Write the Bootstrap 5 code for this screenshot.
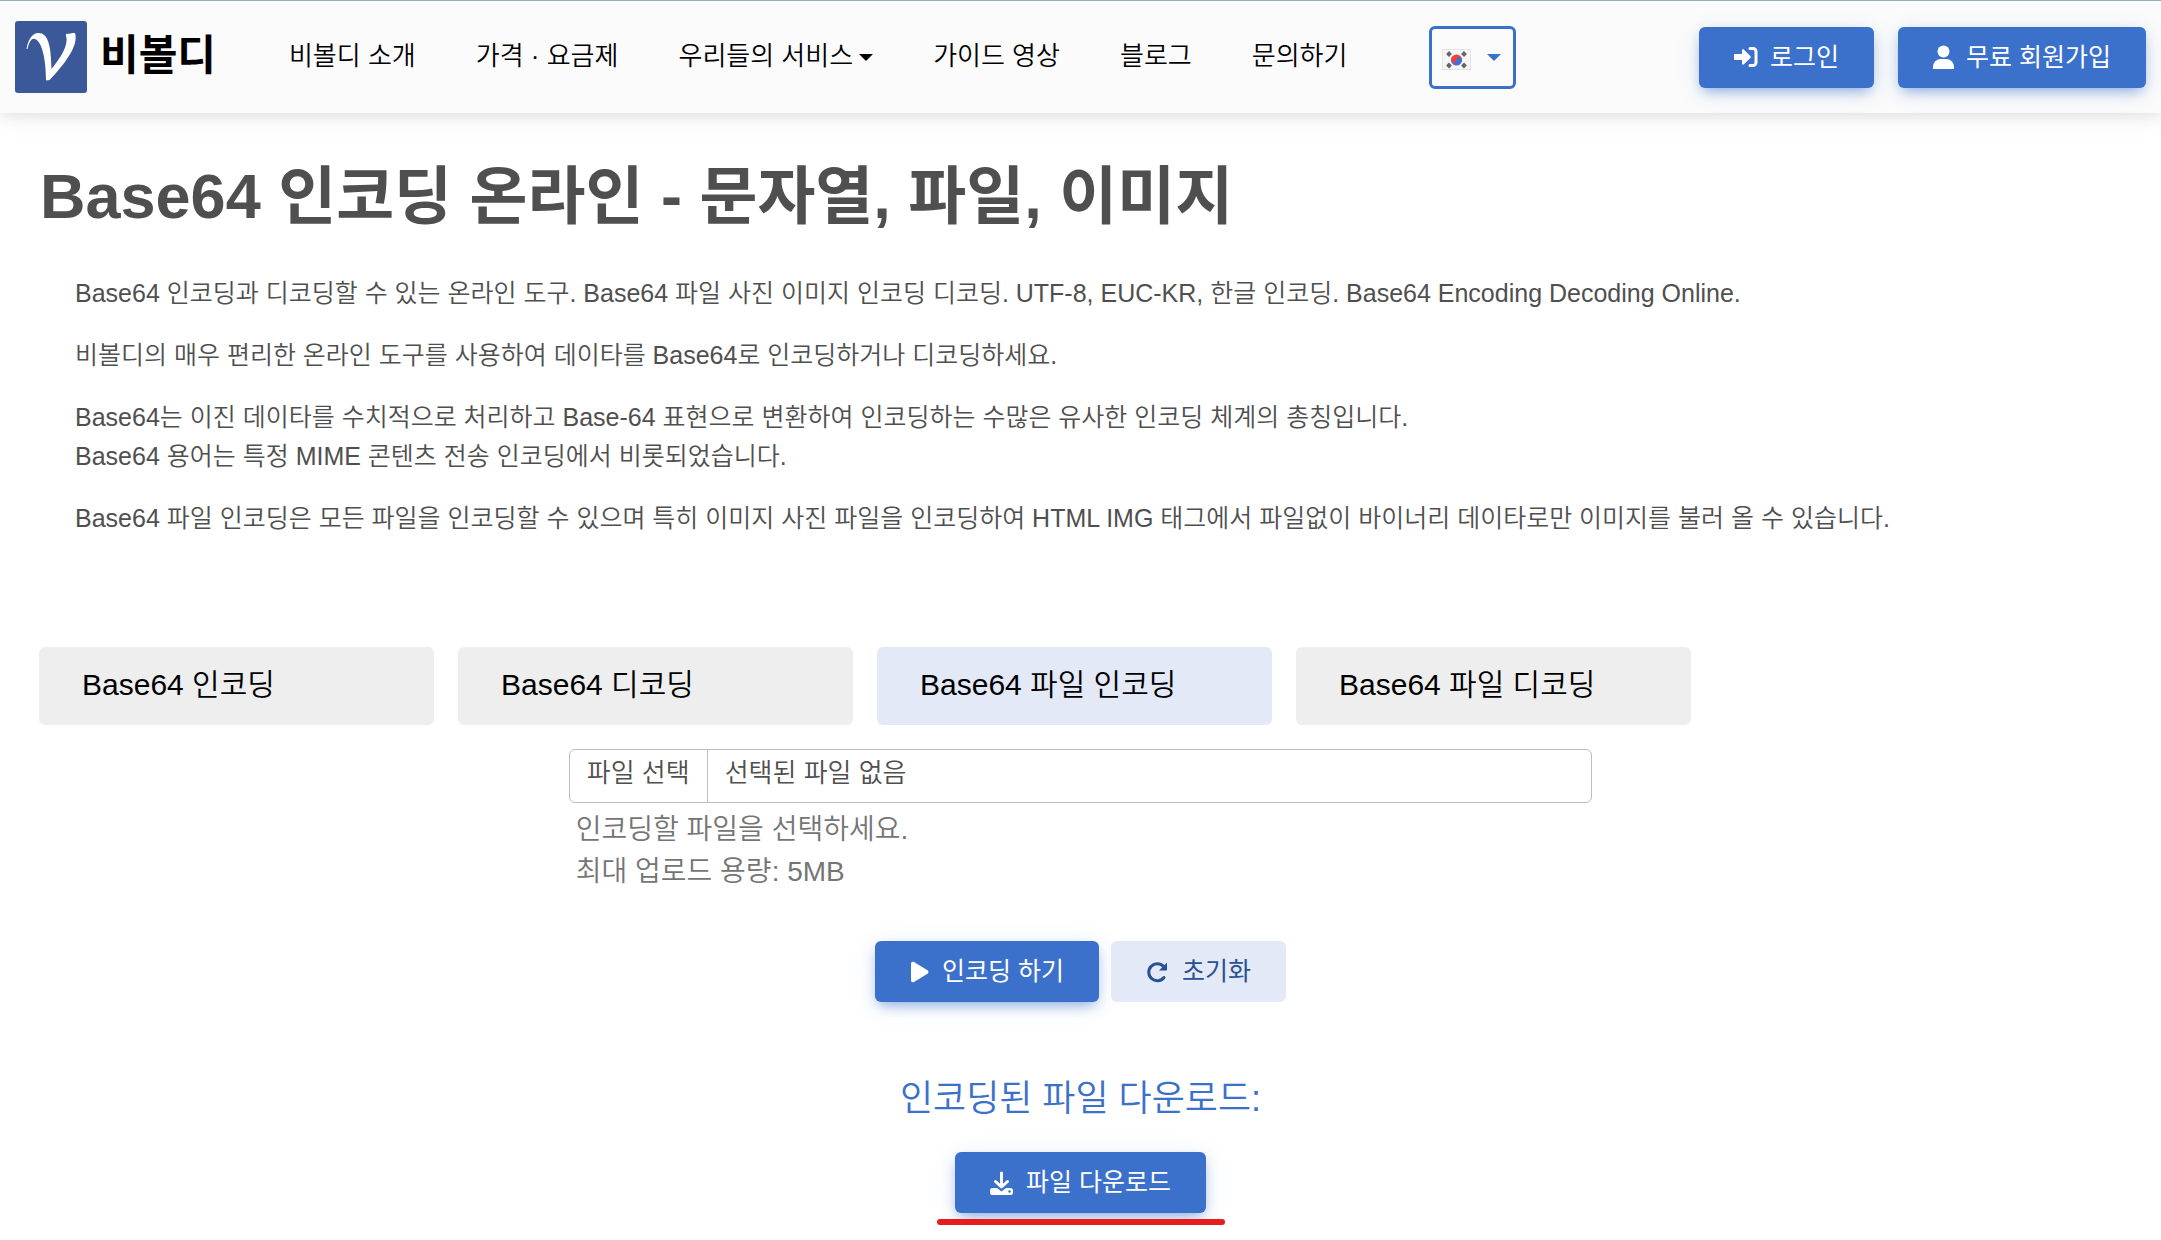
<!DOCTYPE html>
<html lang="ko">
<head>
<meta charset="utf-8">
<meta name="viewport" content="width=device-width, initial-scale=1">
<title>Base64 인코딩 온라인 - 비볼디</title>
<link href="https://cdn.jsdelivr.net/npm/bootstrap@5.3.0/dist/css/bootstrap.min.css" rel="stylesheet">
<style>
  :root { --brand: #3b71ca; --brand-soft: #e3e9f7; --ink: #4f4f4f; }
  body { font-family: "Liberation Sans", "Noto Sans CJK KR", sans-serif; font-size: 25px; font-weight: 350; line-height: 39px; color: var(--ink); background: #fff; }
  .site-bar { background: #fbfbfb; border-top: 1px solid #8fb1b7; min-height: 113px; padding: 0 15px; box-shadow: 0 4px 12px rgba(0,0,0,.08), 0 4px 30px rgba(0,0,0,.05); }
  .site-bar .navbar-brand { font-size: 42px; font-weight: 700; line-height: 48px; color: #000; gap: 13px; margin-right: 43px; }
  .brand-name { padding-bottom: 2px; }
  .site-bar .navbar-nav .nav-link { padding: 0 30px 2px; font-size: 26px; line-height: 40px; color: #000; white-space: nowrap; }
  .site-bar .dropdown-toggle::after { margin-left: 6px; border-width: 7px; border-bottom: 0; vertical-align: 4px; }
  .lang-btn { border: 3px solid var(--brand); color: var(--brand); width: 87px; height: 63px; padding: 0 10px; margin-left: 52px; border-radius: 6px; }
  .site-bar .lang-btn::after { margin-left: 16px; vertical-align: 0; }
  .act { font-size: 25px; font-weight: 400; line-height: 37px; padding: 12px 35px; gap: 12px; border: 0; border-radius: 6px; white-space: nowrap; display: inline-flex; align-items: center; }
  .act-main, .act-main:hover { background: var(--brand); color: #fff; box-shadow: 0 6px 14px -4px rgba(59,113,202,.6), 0 4px 24px rgba(59,113,202,.12); }
  .act-soft { background: var(--brand-soft); color: #285192; }
  .ico { height: 24px; fill: currentColor; flex: none; }
  .page-title { font-size: 63px; line-height: 74px; font-weight: 700; padding: 46px 40px 0; margin-bottom: 41px; }
  .intro { padding: 0 75px; margin-bottom: 109px; }
  .intro p { margin-bottom: 23px; }
  .tools { padding: 0 51px 0 39px; margin-bottom: 24px; }
  .tool-tab { display: block; width: 100%; font-size: 30px; font-weight: 350; line-height: 46px; padding: 15px 43px 17px; border: 0; border-radius: 6px; background: #eee; color: #000; text-align: left; white-space: nowrap; }
  .tool-tab.active { background: var(--brand-soft); }
  .upload { padding: 0 45px; }
  .file-box { font-size: 26px; border: 1px solid #bdbdbd; border-radius: 6px; height: 54px; color: var(--ink); cursor: pointer; }
  .file-box span { padding: 4px 17px 9px; }
  .file-box .pick { border-right: 1px solid #bdbdbd; }
  .file-note { font-size: 28px; line-height: 42px; color: #757575; padding: 6px 7px 0; margin-bottom: 48px; }
  .result-title { font-size: 36px; line-height: 54px; font-weight: 350; color: var(--brand); margin: 70px 0 26px; }
  .underline-mark { width: 288px; height: 6px; border-radius: 3px; background: #e81c1c; margin-top: 6px; }
</style>
</head>
<body>
<nav class="navbar navbar-expand site-bar">
  <a class="navbar-brand d-flex align-items-center p-0" href="#">
    <svg width="72" height="72" viewBox="0 0 72 72" role="img" aria-label="비볼디 로고"><rect width="72" height="72" rx="3" fill="#3b5998"/><path d="M11.500 28C13 19 17 12 23.500 12 33 12 36 24 36.500 48 46 36 54 24 51 14.500V13c3-.3 6-1 9-1 4 12-10 31-25.500 47l-3.500.5C31 42 28 21 20 18c-4-1-6 4-7.500 10z" fill="#fff"/></svg>
    <span class="brand-name">비볼디</span>
  </a>
  <ul class="navbar-nav align-items-center">
    <li class="nav-item"><a class="nav-link" href="#">비볼디 소개</a></li>
    <li class="nav-item"><a class="nav-link" href="#">가격 · 요금제</a></li>
    <li class="nav-item dropdown"><a class="nav-link dropdown-toggle" href="#" role="button" data-bs-toggle="dropdown">우리들의 서비스</a></li>
    <li class="nav-item"><a class="nav-link" href="#">가이드 영상</a></li>
    <li class="nav-item"><a class="nav-link" href="#">블로그</a></li>
    <li class="nav-item"><a class="nav-link" href="#">문의하기</a></li>
  </ul>
  <button type="button" class="btn lang-btn dropdown-toggle d-flex align-items-center" aria-label="한국어" data-bs-toggle="dropdown">
    <svg width="29" height="25" viewBox="0 0 29 25" aria-hidden="true"><rect y="4" width="29" height="21" fill="#e4e4e4"/><rect x="1" y="5" width="27" height="19" fill="#f6f6f6"/><path d="M9 15a5.500 5.500 0 0 1 11 0z" fill="#f0413f"/><path d="M9 15a5.500 5.500 0 0 0 11 0z" fill="#3f6fd8"/><circle cx="11.700" cy="15" r="2.700" fill="#f0413f"/><circle cx="17.300" cy="15" r="2.700" fill="#3f6fd8"/><path d="M5.500 10.500l3-3M20.500 7.500l3 3M5.500 19l3 3M20.500 22l3-3" stroke="#666" stroke-width="4"/></svg>
  </button>
  <div class="d-flex gap-4 ms-auto">
    <button type="button" class="btn act act-main"><svg class="ico" width="24" viewBox="0 0 24 24"><path d="M1 9h7V5.500c0-1.200 1.200-1.500 2-.7l6.300 6.200c.6.600.6 1.400 0 2L10 19.200c-.8.800-2 .5-2-.7V15H1c-.6 0-1-.4-1-1v-4c0-.6.4-1 1-1z"/><path d="M16 3.500h3a3 3 0 0 1 3 3v11a3 3 0 0 1-3 3h-3" fill="none" stroke="currentColor" stroke-width="3" stroke-linecap="round"/></svg>로그인</button>
    <button type="button" class="btn act act-main"><svg class="ico" width="21" viewBox="0 0 21 24"><circle cx="10.500" cy="6.500" r="6"/><path d="M0 24v-2a8 8 0 0 1 8-8h5a8 8 0 0 1 8 8v2z"/></svg>무료 회원가입</button>
  </div>
</nav>

<main>
  <h1 class="page-title">Base64 인코딩 온라인 - 문자열, 파일, 이미지</h1>
  <section class="intro">
    <p>Base64 인코딩과 디코딩할 수 있는 온라인 도구. Base64 파일 사진 이미지 인코딩 디코딩. UTF-8, EUC-KR, 한글 인코딩. Base64 Encoding Decoding Online.</p>
    <p>비볼디의 매우 편리한 온라인 도구를 사용하여 데이타를 Base64로 인코딩하거나 디코딩하세요.</p>
    <p>Base64는 이진 데이타를 수치적으로 처리하고 Base-64 표현으로 변환하여 인코딩하는 수많은 유사한 인코딩 체계의 총칭입니다.<br>Base64 용어는 특정 MIME 콘텐츠 전송 인코딩에서 비롯되었습니다.</p>
    <p>Base64 파일 인코딩은 모든 파일을 인코딩할 수 있으며 특히 이미지 사진 파일을 인코딩하여 HTML IMG 태그에서 파일없이 바이너리 데이타로만 이미지를 불러 올 수 있습니다.</p>
  </section>

  <div class="tools">
    <div class="row row-cols-5 gx-4">
      <div class="col"><button type="button" class="tool-tab">Base64 인코딩</button></div>
      <div class="col"><button type="button" class="tool-tab">Base64 디코딩</button></div>
      <div class="col"><button type="button" class="tool-tab active">Base64 파일 인코딩</button></div>
      <div class="col"><button type="button" class="tool-tab">Base64 파일 디코딩</button></div>
    </div>
  </div>

  <form class="upload">
    <div class="row gx-4 justify-content-center">
      <div class="col-6">
        <input class="visually-hidden" type="file" id="source-file">
        <label class="file-box d-flex" for="source-file"><span class="pick">파일 선택</span><span>선택된 파일 없음</span></label>
        <div class="file-note">인코딩할 파일을 선택하세요.<br>최대 업로드 용량: 5MB</div>
      </div>
    </div>
    <div class="d-flex justify-content-center">
      <button type="button" class="btn act act-main me-2"><svg class="ico" width="20" viewBox="0 0 20 24"><path d="M1 4c0-2 1.500-2.800 3-2l13.500 8.300c1.300.8 1.300 2.600 0 3.400L4 22c-1.500.8-3 0-3-2z"/></svg>인코딩 하기</button>
      <button type="button" class="btn act act-soft ms-1"><svg class="ico" width="24" viewBox="0 0 24 24"><path d="M18 17.500a8.500 8.500 0 1 1-.5-11" fill="none" stroke="currentColor" stroke-width="3" stroke-linecap="round"/><path d="M21 2.500v7.200c0 .5-.3.800-.8.800H13z"/></svg>초기화</button>
    </div>
    <h2 class="result-title text-center">인코딩된 파일 다운로드:</h2>
    <div class="d-flex flex-column align-items-center">
      <button type="button" class="btn act act-main"><svg class="ico" width="24" viewBox="0 0 24 24"><path d="M11.500 2v13M5.500 10.500l6 5.500 6-5.500" fill="none" stroke="currentColor" stroke-width="3" stroke-linecap="round" stroke-linejoin="round"/><path d="M2.500 17H7l4.500 3.500L16 17h4.500a2.500 2.500 0 0 1 2.500 2.500v2a2.500 2.500 0 0 1-2.500 2.500h-18A2.500 2.500 0 0 1 0 21.500v-2A2.500 2.500 0 0 1 2.500 17z"/><circle cx="19.500" cy="20.500" r="1.200" fill="#3b71ca"/></svg>파일 다운로드</button>
      <div class="underline-mark"></div>
    </div>
  </form>
</main>
<script src="https://cdn.jsdelivr.net/npm/bootstrap@5.3.0/dist/js/bootstrap.bundle.min.js"></script>
</body>
</html>
